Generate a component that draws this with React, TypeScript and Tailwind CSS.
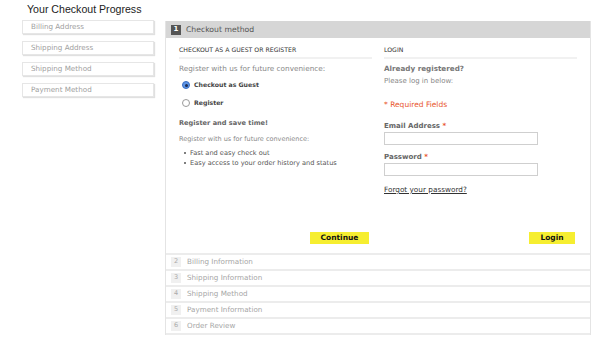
const sideSteps = ['Billing Address', 'Shipping Address', 'Shipping Method', 'Payment Method'];

const laterSteps = [
  { n: 2, label: 'Billing Information' },
  { n: 3, label: 'Shipping Information' },
  { n: 4, label: 'Shipping Method' },
  { n: 5, label: 'Payment Information' },
  { n: 6, label: 'Order Review' },
];

const Radio = ({ checked }: { checked?: boolean }) =>
  checked ? (
    <span className="flex h-[8px] w-[8px] items-center justify-center rounded-full border border-[#3a6fc4] bg-[#5d95e6]">
      <span className="h-[3px] w-[3px] rounded-full bg-[#1b2d55]" />
    </span>
  ) : (
    <span className="h-[8px] w-[8px] rounded-full border border-[#9a9a9a] bg-white" />
  );

const App = () => {
  return (
    <div className="h-[340px] w-[611px] bg-white text-[#666]" style={{ fontFamily: '"DejaVu Sans", Verdana, sans-serif' }}>
      <h1
        className="h-[20px] pl-[27px] pt-[2px] text-[10.6px] leading-[14px] text-[#222]"
        style={{ fontFamily: '"Liberation Sans", Arial, sans-serif' }}
      >
        Your Checkout Progress
      </h1>

      <div className="flex">
        {/* sidebar */}
        <aside className="ml-[22px] flex w-[132px] flex-col gap-[7px]">
          {sideSteps.map((s) => (
            <div
              key={s}
              className="flex h-[14px] items-center border border-[#e6e6e6] bg-white pl-[8px] text-[7.2px] text-[#a0a0a0] shadow-[1px_1px_1px_rgba(0,0,0,0.12)]"
            >
              {s}
            </div>
          ))}
        </aside>

        {/* main panel */}
        <section className="ml-[11px] mt-[1px] w-[426px] border-x border-[#e4e4e4]">
          <div className="flex h-[17px] items-center gap-[5px] bg-[#d6d6d6] pl-[5px]">
            <span className="flex h-[10px] w-[10px] items-center justify-center bg-[#555] text-[7px] font-bold text-white">1</span>
            <span className="text-[7.7px] text-[#555]">Checkout method</span>
          </div>

          <div className="grid h-[217px] grid-cols-2 gap-[12px] border-b-2 border-[#ececec] px-[13px]">
            {/* guest / register */}
            <div className="flex flex-col">
              <h2 className="mt-[7px] border-b-2 border-[#f1f1f1] pb-[2px] text-[6.2px] uppercase leading-[10px] text-[#333]">
                Checkout as a guest or register
              </h2>
              <p className="mt-[3px] text-[7.3px] leading-[14px] text-[#888]">Register with us for future convenience:</p>
              <label className="mt-[2px] flex h-[14px] items-center gap-[4px] pl-[3px] text-[6.2px] font-bold text-[#444]">
                <Radio checked />
                Checkout as Guest
              </label>
              <label className="mt-[4px] flex h-[14px] items-center gap-[4px] pl-[3px] text-[6.2px] font-bold text-[#444]">
                <Radio />
                Register
              </label>
              <p className="mt-[6px] text-[6.6px] font-bold leading-[14px] text-[#666]">Register and save time!</p>
              <p className="mt-[3px] text-[6.5px] leading-[12px] text-[#888]">Register with us for future convenience:</p>
              <ul className="mt-[3px] pl-[5px] text-[6.6px] leading-[10px] text-[#555]">
                <li className="flex items-center gap-[4px]">
                  <span className="h-[2px] w-[2px] rounded-full bg-[#555]" />
                  Fast and easy check out
                </li>
                <li className="flex items-center gap-[4px]">
                  <span className="h-[2px] w-[2px] rounded-full bg-[#555]" />
                  Easy access to your order history and status
                </li>
              </ul>
              <div className="mb-[9px] mt-auto flex justify-end pr-[3px]">
                <button className="h-[12px] w-[59px] bg-[#f6ee30] text-[7.5px] font-bold leading-[12px] text-[#111]">Continue</button>
              </div>
            </div>

            {/* login */}
            <div className="flex flex-col">
              <h2 className="mt-[7px] border-b-2 border-[#f1f1f1] pb-[2px] text-[6.2px] uppercase leading-[10px] text-[#333]">Login</h2>
              <p className="mt-[4px] text-[7.2px] font-bold leading-[12px] text-[#777]">Already registered?</p>
              <p className="text-[7px] leading-[12px] text-[#888]">Please log in below:</p>
              <p className="mt-[12px] text-[7.5px] leading-[12px] text-[#e8552c]">* Required Fields</p>
              <label className="mt-[9px] text-[7px] font-bold leading-[12px] text-[#666]">
                Email Address <span className="text-[#e8552c]">*</span>
              </label>
              <input className="h-[13px] w-[154px] border border-[#cfcfcf] bg-white outline-none" />
              <label className="mt-[6px] text-[7px] font-bold leading-[12px] text-[#666]">
                Password <span className="text-[#e8552c]">*</span>
              </label>
              <input type="password" className="h-[13px] w-[154px] border border-[#cfcfcf] bg-white outline-none" />
              <a href="#" className="mt-[8px] text-[7.3px] leading-[12px] text-[#333] underline">
                Forgot your password?
              </a>
              <div className="mb-[9px] mt-auto flex justify-end pr-[2px]">
                <button className="h-[12px] w-[46px] bg-[#f6ee30] text-[7.5px] font-bold leading-[12px] text-[#111]">Login</button>
              </div>
            </div>
          </div>

          {laterSteps.map((s) => (
            <div key={s.n} className="flex h-[16px] items-center gap-[6px] border-b-2 border-[#ececec] pl-[5px]">
              <span className="flex h-[10px] w-[10px] items-center justify-center bg-[#f0f0f0] text-[6.5px] text-[#aaa]">{s.n}</span>
              <span className="text-[7.2px] text-[#a6a6a6]">{s.label}</span>
            </div>
          ))}
        </section>
      </div>
    </div>
  );
};

export default App;
